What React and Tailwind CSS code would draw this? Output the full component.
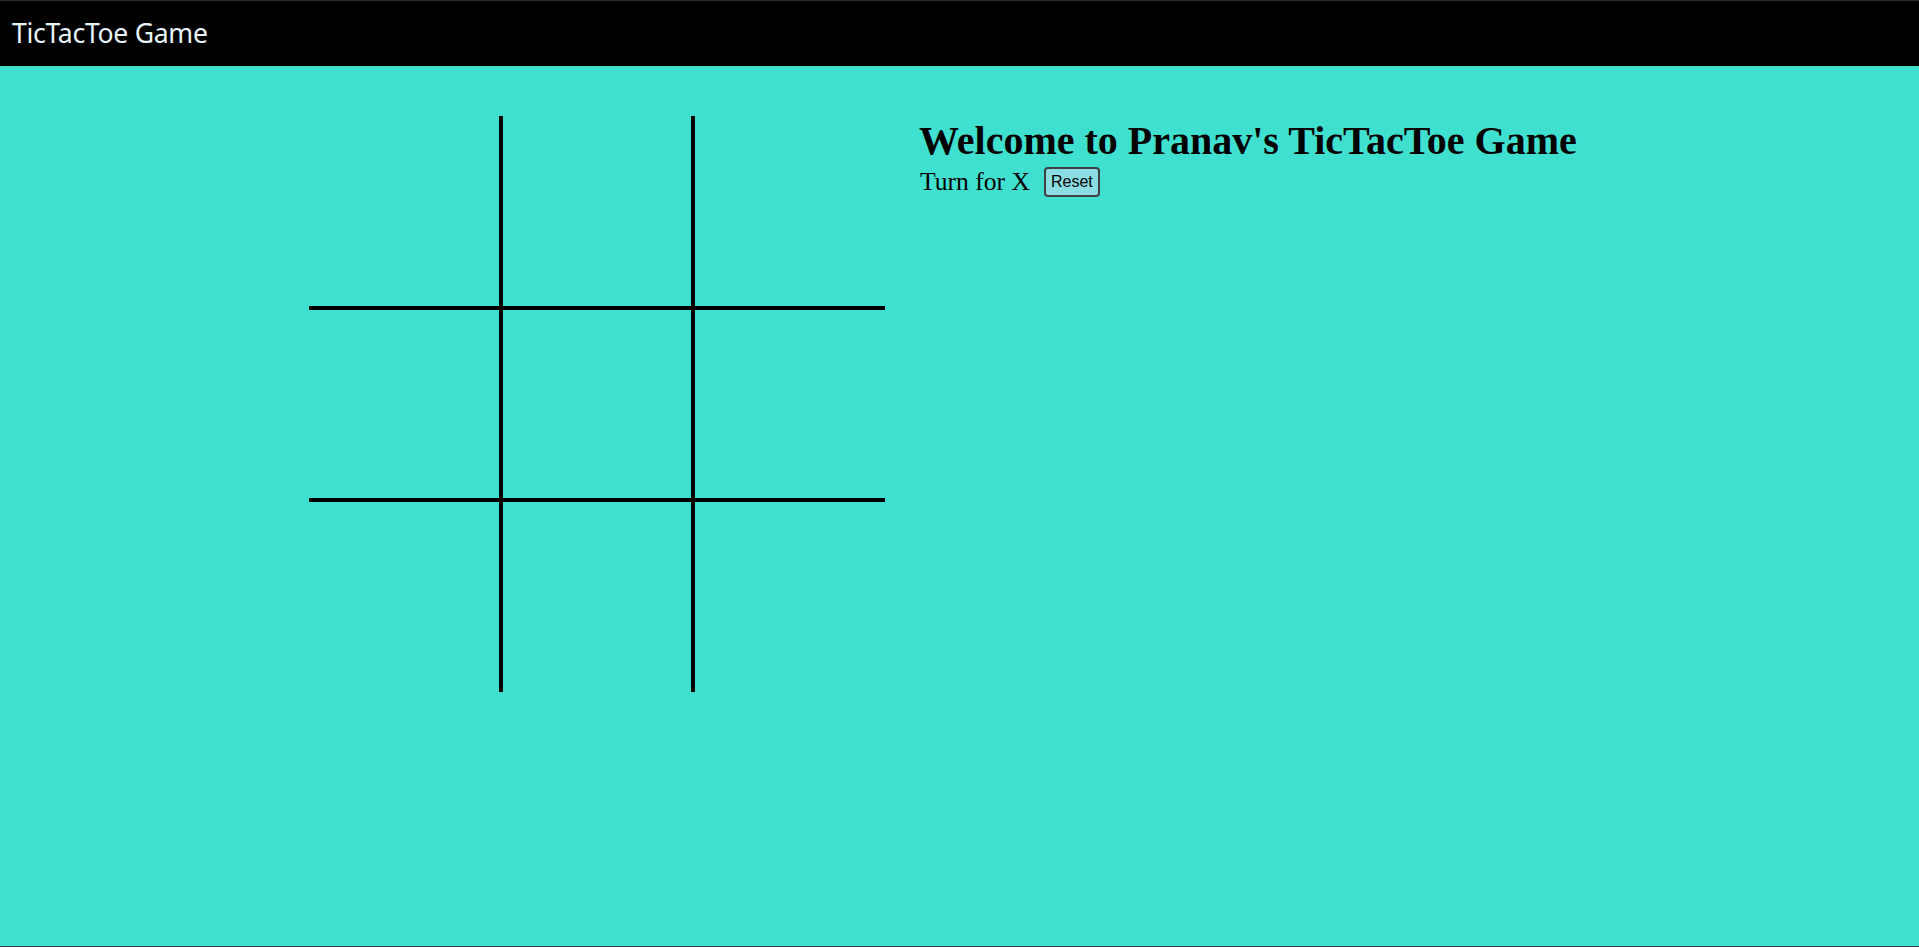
import { useState } from "react";

const cellBorders = [
  "border-r-2 border-b-2",
  "border-l-2 border-r-2 border-b-2",
  "border-l-2 border-b-2",
  "border-t-2 border-r-2 border-b-2",
  "border-2",
  "border-t-2 border-l-2 border-b-2",
  "border-t-2 border-r-2",
  "border-t-2 border-l-2 border-r-2",
  "border-t-2 border-l-2",
];

function Board({ squares, onPlay }) {
  return (
    <div className="grid grid-cols-3 w-[576px] shrink-0">
      {squares.map((val, i) => (
        <div
          key={i}
          onClick={() => onPlay(i)}
          className={`h-[192px] border-black flex items-center justify-center text-[96px] font-['Liberation_Sans',sans-serif] cursor-pointer ${cellBorders[i]}`}
        >
          {val}
        </div>
      ))}
    </div>
  );
}

export default function App() {
  const [squares, setSquares] = useState(Array(9).fill(null));
  const [xTurn, setXTurn] = useState(true);

  const play = (i) => {
    if (squares[i]) return;
    const next = squares.slice();
    next[i] = xTurn ? "X" : "O";
    setSquares(next);
    setXTurn(!xTurn);
  };

  const reset = () => {
    setSquares(Array(9).fill(null));
    setXTurn(true);
  };

  return (
    <div className="h-screen flex flex-col bg-[#40e0d0]">
      <nav className="h-[66px] shrink-0 bg-black border-t border-[#2b2b2b] flex items-center px-[12px]">
        <span className="text-[#e6f4fb] text-[26.6px] font-['Noto_Sans',sans-serif] tracking-[-0.3px]">
          TicTacToe Game
        </span>
      </nav>
      <main className="flex-1 flex items-start gap-[34px] pt-[50px] pl-[309px] border-b border-[#3d3d3d]">
        <Board squares={squares} onPlay={play} />
        <div className="font-['Liberation_Serif',serif] text-black pt-[2px]">
          <h1 className="text-[40px] font-bold leading-[46px]">
            Welcome to Pranav's TicTacToe Game
          </h1>
          <div className="flex items-center mt-[3px] pl-[1px]">
            <span className="text-[25.6px] leading-[30px]">
              Turn for {xTurn ? "X" : "O"}
            </span>
            <button
              onClick={reset}
              className="ml-[14px] h-[30px] px-[5px] bg-[#89dde3] border-2 border-[#3f3f3f] rounded-[4px] text-[16px] leading-[18px] font-['Liberation_Sans',sans-serif] text-black"
            >
              Reset
            </button>
          </div>
        </div>
      </main>
    </div>
  );
}
